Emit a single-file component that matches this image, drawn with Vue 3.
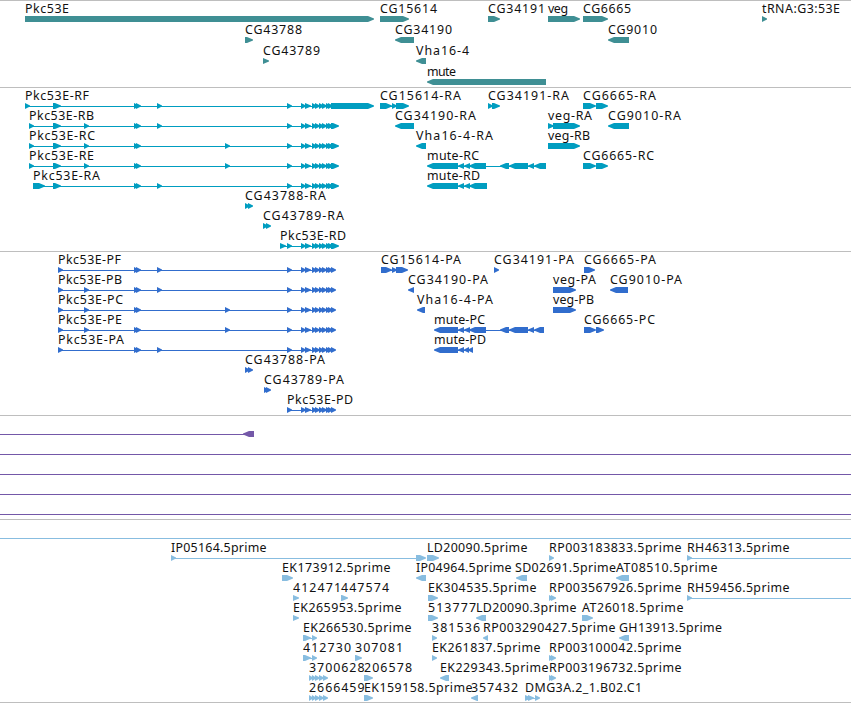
<template>
  <main class="browser">
    <section
      v-for="track in tracks"
      :key="track.name"
      class="track"
      :class="track.name"
    >
      <svg v-for="(row, i) in track.rows" :key="i" class="row">
        <g v-for="(feature, j) in row" :key="j">
          <rect
            v-if="feature.line"
            class="intron"
            :x="feature.line[0]"
            y="16"
            :width="feature.line[1] - feature.line[0]"
            height="1"
          />
          <path
            v-for="(part, k) in feature.parts"
            :key="k"
            class="exon"
            :d="arrow(part[0], part[1], feature.left)"
          />
          <text
            v-if="feature.label"
            :x="feature.x"
            y="10"
            :textLength="feature.width"
            lengthAdjust="spacing"
          >{{ feature.label }}</text>
        </g>
      </svg>
    </section>
  </main>
</template>

<script setup>
const HEAD = 6;

// Block with a pointed head, 6px tall
const arrow = (start, end, left) => {
  const head = Math.min(HEAD, end - start);
  if (left) {
    return `M${end} 13H${start + head}L${start} 15.5V16.5L${start + head} 19H${end}Z`;
  }
  return `M${start} 13H${end - head}L${end} 15.5V16.5L${end - head} 19H${start}Z`;
};

// Forward feature, drawn from its label's left edge
const fwd = (label, x, width, parts, line) => ({ label, x, width, parts, line });

// Reverse feature, heads point left
const rev = (label, x, width, parts, line) => ({ label, x, width, parts, line, left: true });

const plain = (from, to) => ({ line: [from, to], parts: [] });

const mid = [[134, 139], [136, 141]];
const cluster = [[301, 306], [305, 311], [312, 317], [315, 320], [319, 324], [322, 327], [326, 331]];
const tailR = [[287, 292], ...cluster, [328, 334], [331, 339]];
const tailP = [[287, 292], ...cluster, [328, 333], [331, 336]];
const muteEnd = [[500, 509], [509, 528], [528, 534]];
const steps = [[309, 313], [312, 316], [315, 320], [319, 324], [323, 328]];

const tracks = [
  {
    name: 'gene',
    rows: [
      [
        fwd('Pkc53E', 25, 44, [[25, 374]]),
        fwd('CG15614', 380, 57, [[380, 409]]),
        fwd('CG34191', 488, 57, [[488, 500]]),
        fwd('veg', 548, 20, [[548, 580]]),
        fwd('CG6665', 583, 48, [[583, 608]]),
        fwd('tRNA:G3:53E', 762, 78, [[762, 767]]),
      ],
      [
        fwd('CG43788', 245, 57, [[245, 253]]),
        rev('CG34190', 395, 57, [[395, 414]]),
        rev('CG9010', 608, 49, [[608, 629]]),
      ],
      [
        fwd('CG43789', 263, 57, [[263, 269]]),
        rev('Vha16-4', 416, 53, [[416, 426]]),
      ],
      [rev('mute', 427, 29, [[427, 546]])],
    ],
  },
  {
    name: 'mrna',
    rows: [
      [
        fwd('Pkc53E-RF', 25, 64, [[25, 30], [53, 61], ...mid, [157, 162], [287, 292], ...cluster, [328, 333], [331, 374]], [25, 370]),
        fwd('CG15614-RA', 380, 81, [[380, 392], [392, 397], [396, 409]], [380, 407]),
        fwd('CG34191-RA', 488, 81, [[488, 493], [492, 500]]),
        fwd('CG6665-RA', 583, 73, [[583, 596], [596, 608]]),
      ],
      [
        fwd('Pkc53E-RB', 29, 65, [[29, 34], [53, 61], [84, 89], ...mid, [157, 162], ...tailR], [29, 338]),
        rev('CG34190-RA', 395, 81, [[395, 414]]),
        fwd('veg-RA', 548, 44, [[548, 554], [553, 580]]),
        rev('CG9010-RA', 608, 73, [[608, 629]]),
      ],
      [
        fwd('Pkc53E-RC', 29, 66, [[29, 34], [53, 61], [84, 89], ...mid, [225, 230], ...tailR], [29, 338]),
        rev('Vha16-4-RA', 416, 77, [[416, 426]]),
        fwd('veg-RB', 548, 42, [[548, 580]]),
      ],
      [
        fwd('Pkc53E-RE', 29, 65, [[29, 34], [53, 61], [84, 89], ...mid, [225, 230], ...tailR], [29, 338]),
        rev('mute-RC', 427, 52, [[427, 458], [458, 464], [464, 470], [469, 486], ...muteEnd, [534, 546]], [430, 546]),
        fwd('CG6665-RC', 583, 71, [[583, 596], [596, 608]]),
      ],
      [
        fwd('Pkc53E-RA', 33, 67, [[33, 45], [53, 61], ...mid, [157, 162], ...tailR], [33, 338]),
        rev('mute-RD', 427, 53, [[427, 458], [458, 464], [464, 470], [469, 487]], [430, 487]),
      ],
      [fwd('CG43788-RA', 245, 81, [[245, 250], [248, 253]])],
      [fwd('CG43789-RA', 263, 81, [[263, 268], [266, 271]])],
      [fwd('Pkc53E-RD', 280, 66, [[280, 286], ...tailR], [280, 338])],
    ],
  },
  {
    name: 'cds',
    rows: [
      [
        fwd('Pkc53E-PF', 58, 63, [[58, 63], ...mid, [157, 162], ...tailP], [58, 335]),
        fwd('CG15614-PA', 381, 80, [[381, 392], [392, 397], [396, 408]], [381, 406]),
        fwd('CG34191-PA', 494, 80, [[494, 499]]),
        fwd('CG6665-PA', 584, 72, [[584, 595]]),
      ],
      [
        fwd('Pkc53E-PB', 58, 64, [[58, 63], [84, 89], ...mid, [157, 162], ...tailP], [58, 335]),
        rev('CG34190-PA', 408, 80, [[408, 414]]),
        fwd('veg-PA', 553, 43, [[553, 576]]),
        rev('CG9010-PA', 610, 72, [[610, 628]]),
      ],
      [
        fwd('Pkc53E-PC', 58, 65, [[58, 63], [84, 89], ...mid, [225, 230], ...tailP], [58, 335]),
        rev('Vha16-4-PA', 417, 76, [[417, 425]]),
        fwd('veg-PB', 553, 41, [[553, 576]]),
      ],
      [
        fwd('Pkc53E-PE', 58, 64, [[58, 63], [84, 89], ...mid, [225, 230], ...tailP], [58, 335]),
        rev('mute-PC', 434, 51, [[434, 458], [458, 464], [464, 470], [469, 486], ...muteEnd, [534, 544]], [437, 544]),
        fwd('CG6665-PC', 584, 71, [[584, 596], [596, 604]]),
      ],
      [
        fwd('Pkc53E-PA', 58, 66, [[58, 63], ...mid, [157, 162], ...tailP], [58, 335]),
        rev('mute-PD', 434, 52, [[434, 458], [458, 464], [464, 469], [468, 473]], [437, 473]),
      ],
      [fwd('CG43788-PA', 245, 80, [[245, 250], [248, 253]])],
      [fwd('CG43789-PA', 264, 80, [[264, 269], [266, 271]])],
      [fwd('Pkc53E-PD', 287, 66, [...tailP], [287, 335])],
    ],
  },
  {
    name: 'cdna',
    rows: [
      [rev('', 0, 0, [[243, 254]], [0, 246])],
      [plain(0, 851)],
      [plain(0, 851)],
      [plain(0, 851)],
      [plain(0, 851)],
    ],
  },
  {
    name: 'est',
    rows: [
      [plain(0, 851)],
      [
        fwd('IP05164.5prime', 171, 95.5, [[171, 176], [416, 426]], [171, 425]),
        fwd('LD20090.5prime', 427, 100.5, [[427, 439]]),
        fwd('RP003183833.5prime', 549, 132.5, [[549, 554]]),
        fwd('RH46313.5prime', 687, 102.5, [[687, 692]], [687, 851]),
      ],
      [
        fwd('EK173912.5prime', 282, 108.5, [[282, 293]]),
        rev('IP04964.5prime', 416, 95.5, [[416, 426]]),
        rev('SD02691.5prime', 515, 101, [[516, 527]]),
        rev('AT08510.5prime', 616, 101.5, [[616, 629]]),
      ],
      [
        fwd('412471', 293, 48, [[293, 299]]),
        fwd('447574', 341, 48, [[341, 348]]),
        fwd('EK304535.5prime', 428, 108.5, [[428, 438]]),
        fwd('RP003567926.5prime', 549, 132.5, [[549, 554], [551, 556]]),
        fwd('RH59456.5prime', 687, 102.5, [[687, 692]], [687, 851]),
      ],
      [
        fwd('EK265953.5prime', 293, 108.5, [[293, 299]]),
        fwd('513777', 428, 48, [[428, 438]]),
        rev('LD20090.3prime', 476, 100.5, [[476, 486]]),
        fwd('AT26018.5prime', 582, 101.5, [[582, 593]]),
      ],
      [
        fwd('EK266530.5prime', 303, 108.5, [[303, 311], [312, 317]], [303, 315]),
        fwd('381536', 432, 48, [[432, 437]]),
        rev('RP003290427.5prime', 483, 132.5, [[483, 488]]),
        rev('GH13913.5prime', 619, 103, [[619, 629]]),
      ],
      [
        fwd('412730', 303, 48, [[303, 311], [312, 317]], [303, 315]),
        fwd('307081', 355, 48, [[355, 362]]),
        fwd('EK261837.5prime', 432, 108.5, [[432, 437]]),
        fwd('RP003100042.5prime', 549, 132.5, [[549, 554], [551, 556]]),
      ],
      [
        fwd('3700628', 309, 55.5, steps),
        fwd('206578', 364, 48, [[364, 373]]),
        rev('EK229343.5prime', 440, 108.5, [[440, 449]]),
        fwd('RP003196732.5prime', 549, 132.5, [[549, 554], [551, 556]]),
      ],
      [
        fwd('2666459', 309, 55.5, steps),
        fwd('EK159158.5prime', 364, 108.5, [[364, 373]]),
        rev('357432', 471, 47, [[471, 478]]),
        fwd('DMG3A.2_1.B02.C1', 525, 117, [[525, 531], [528, 534], [535, 540]], [525, 537]),
      ],
    ],
  },
];
</script>

<style scoped>
.browser {
  display: flex;
  flex-direction: column;
  width: 851px;
  height: 703px;
  box-sizing: border-box;
  overflow: hidden;
  background: #fff;
  border-bottom: 1px solid #bebebe;
}

.track {
  display: flex;
  flex-direction: column;
  flex: none;
  box-sizing: border-box;
  height: 164px;
  padding-top: 2px;
  border-top: 1px solid #bebebe;
}

.row {
  display: block;
  flex: none;
  width: 851px;
  height: 20px;
  overflow: visible;
}

.row text {
  font-family: "Noto Sans", "Open Sans", sans-serif;
  font-size: 12.4px;
  fill: #111;
}

.intron,
.exon {
  fill: currentColor;
}

.intron {
  shape-rendering: crispEdges;
}

.gene {
  height: 87px;
  color: #3f8f94;
}

.gene .row {
  height: 21px;
}

.mrna {
  color: #009dc0;
}

.cds {
  color: #316dcd;
}

.cdna {
  height: 104px;
  color: #7458a8;
}

.est {
  height: 183px;
  color: #88bde0;
}
</style>

<style>
body {
  margin: 0;
  background: #fff;
}
</style>
